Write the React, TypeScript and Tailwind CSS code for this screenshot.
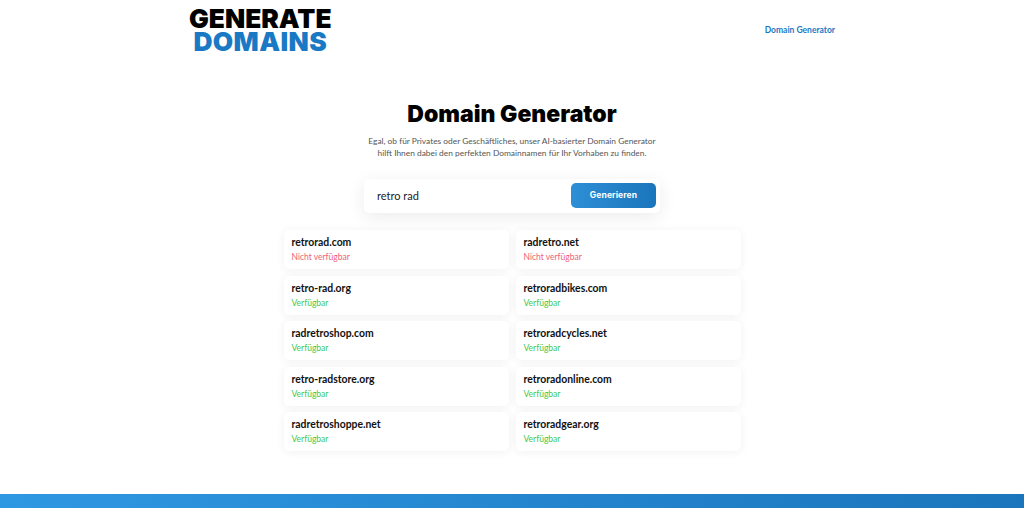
const domains = [
  ['retrorad.com', false],
  ['radretro.net', false],
  ['retro-rad.org', true],
  ['retroradbikes.com', true],
  ['radretroshop.com', true],
  ['retroradcycles.net', true],
  ['retro-radstore.org', true],
  ['retroradonline.com', true],
  ['radretroshoppe.net', true],
  ['retroradgear.org', true],
] as const;

function DomainCard({ name, available }: { name: string; available: boolean }) {
  return (
    <div className="flex h-[39px] flex-col rounded-[5px] bg-white pl-2 pt-[5px] shadow-[0_1px_10px_rgba(0,0,0,0.06)]">
      <div className="text-[10.4px] leading-[15px] font-bold text-[#111]">{name}</div>
      <div className={`text-[8.5px] leading-[15px] ${available ? 'text-[#3fc94f]' : 'text-[#ee5f78]'}`}>
        {available ? 'Verfügbar' : 'Nicht verfügbar'}
      </div>
    </div>
  );
}

export default function App() {
  return (
    <div className="flex h-[508px] w-[1024px] flex-col overflow-hidden bg-white font-['Lato',sans-serif] antialiased">
      <header className="flex h-[60px] items-start justify-between px-[189px]">
        <div className="flex flex-col items-center pt-[7px] font-['Inter',sans-serif] font-black">
          <div className="text-[26.3px] leading-[23px] text-black">GENERATE</div>
          <div className="text-[26.3px] leading-[23px] tracking-[0.4px] text-[#1a79c4]">DOMAINS</div>
        </div>
        <nav className="pt-[24px] text-[8.5px] leading-[13px] font-bold text-[#1a79c4]">Domain Generator</nav>
      </header>
      <main className="flex flex-1 flex-col items-center">
        <h1 className="mt-[40px] font-['Inter',sans-serif] text-[23px] leading-[29px] font-black text-black">Domain Generator</h1>
        <p className="mt-[7px] text-center text-[8.4px] leading-[11.5px] text-[#555]">
          Egal, ob für Privates oder Geschäftliches, unser AI-basierter Domain Generator
          <br />
          hilft Ihnen dabei den perfekten Domainnamen für Ihr Vorhaben zu finden.
        </p>
        <div className="mt-[20px] flex h-[34px] w-[296px] items-center justify-between rounded-[5px] bg-white pl-[13px] pr-[4px] shadow-[0_4px_18px_rgba(0,0,0,0.08)]">
          <span className="text-[11px] text-[#222]">retro rad</span>
          <button className="mb-[1px] h-[25px] w-[85px] rounded-[5px] bg-gradient-to-r from-[#2d8fd6] to-[#1a75bc] font-['Inter',sans-serif] text-[8.5px] font-bold tracking-[0.1px] text-white">
            Generieren
          </button>
        </div>
        <div className="mt-[17px] grid w-[457px] grid-cols-2 gap-x-[7px] gap-y-[6.5px]">
          {domains.map(([name, available]) => (
            <DomainCard key={name} name={name} available={available} />
          ))}
        </div>
      </main>
      <footer className="h-[14px] bg-gradient-to-r from-[#2f98e3] to-[#1a75bc]" />
    </div>
  );
}
